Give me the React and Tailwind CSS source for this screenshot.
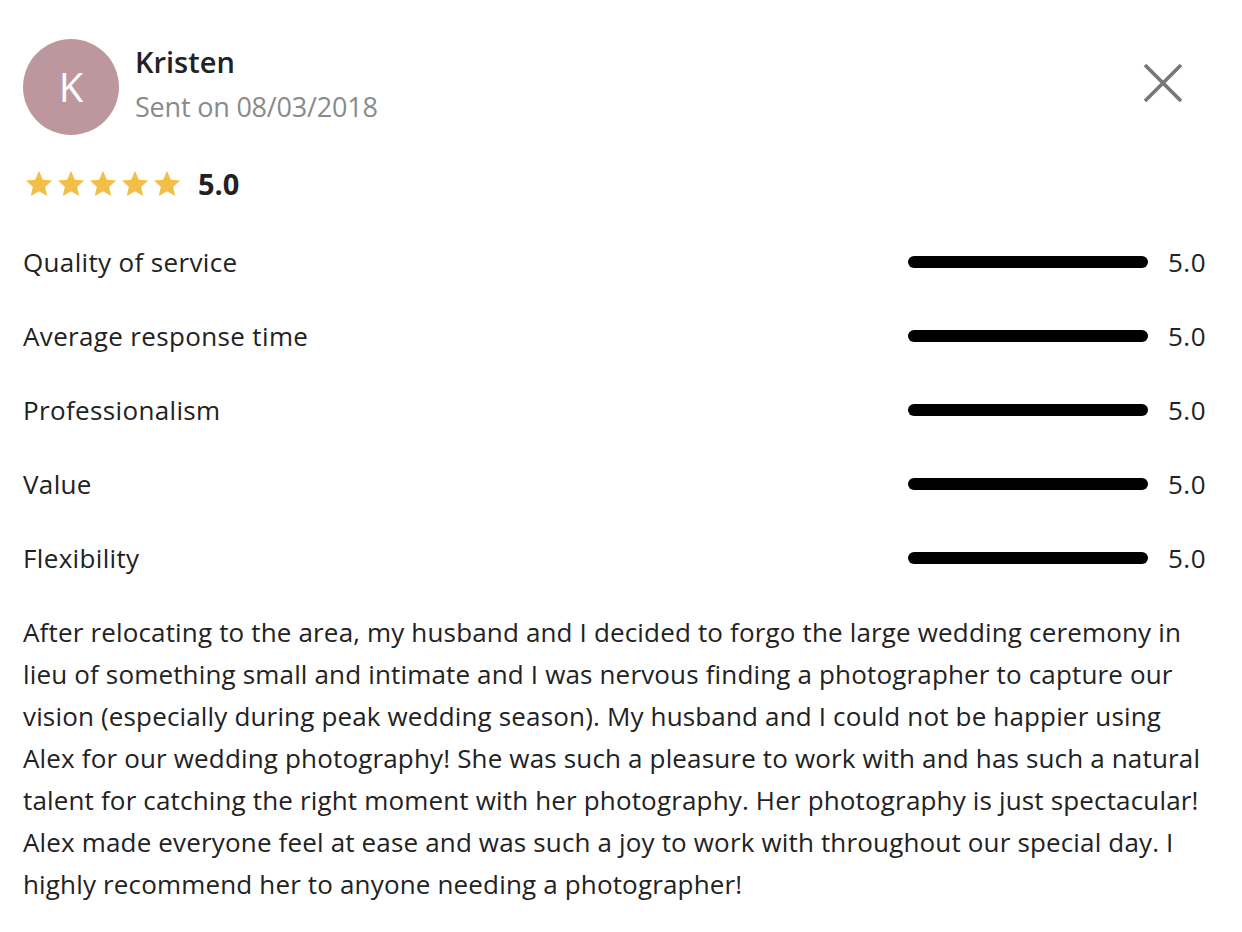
const ratings = [
  "Quality of service",
  "Average response time",
  "Professionalism",
  "Value",
  "Flexibility",
];

const lines = [
  "After relocating to the area, my husband and I decided to forgo the large wedding ceremony in",
  "lieu of something small and intimate and I was nervous finding a photographer to capture our",
  "vision (especially during peak wedding season). My husband and I could not be happier using",
  "Alex for our wedding photography! She was such a pleasure to work with and has such a natural",
  "talent for catching the right moment with her photography. Her photography is just spectacular!",
  "Alex made everyone feel at ease and was such a joy to work with throughout our special day. I",
  "highly recommend her to anyone needing a photographer!",
];

function Star() {
  return (
    <svg viewBox="0 0 24 24" className="w-[30px] h-[30px] -mx-[1px]">
      <path
        d="M12 1.6l3.1 6.9 7.4.7-5.6 5 1.7 7.4L12 17.8l-6.6 3.8 1.7-7.4-5.6-5 7.4-.7z"
        fill="#F1BF45"
      />
    </svg>
  );
}

export default function App() {
  return (
    <div className="relative min-h-[932px] bg-white text-[#222] font-['Open_Sans',sans-serif] pt-[39px] pl-[23px] pr-[36px]">
      <button className="absolute top-[63px] right-[59px]">
        <svg viewBox="0 0 40 40" className="w-[40px] h-[40px]">
          <path d="M2 2L38 38M38 2L2 38" stroke="#777" strokeWidth="3.6" />
        </svg>
      </button>

      <div className="flex items-start gap-4">
        <div className="w-[96px] h-[96px] rounded-full bg-[#BC989E] flex items-center justify-center text-white text-[40px] leading-none">
          K
        </div>
        <div className="pt-[5px]">
          <div className="text-[29px] font-semibold leading-[36px]">Kristen</div>
          <div className="text-[27px] text-[#8a8a8a] leading-[34px] mt-[10px] tracking-[-0.2px]">Sent on 08/03/2018</div>
        </div>
      </div>

      <div className="flex items-center mt-[33px] h-[32px]">
        <div className="flex gap-[4px] ml-[2px]">
          <Star />
          <Star />
          <Star />
          <Star />
          <Star />
        </div>
        <span className="ml-[17px] text-[29px] font-bold">5.0</span>
      </div>

      <div className="mt-[25px]">
        {ratings.map((r) => (
          <div key={r} className="flex items-center h-[74px] text-[26px]">
            <span className="flex-1 tracking-[0.35px]">{r}</span>
            <div className="w-[240px] h-[12px] rounded-full bg-black" />
            <span className="ml-[20px] tracking-[0.5px]">5.0</span>
          </div>
        ))}
      </div>

      <p className="mt-[16px] text-[26px] leading-[42px] tracking-[0.16px]">
        {lines.map((l, i) => (
          <span key={i} className="block whitespace-nowrap">
            {l}
          </span>
        ))}
      </p>
    </div>
  );
}
